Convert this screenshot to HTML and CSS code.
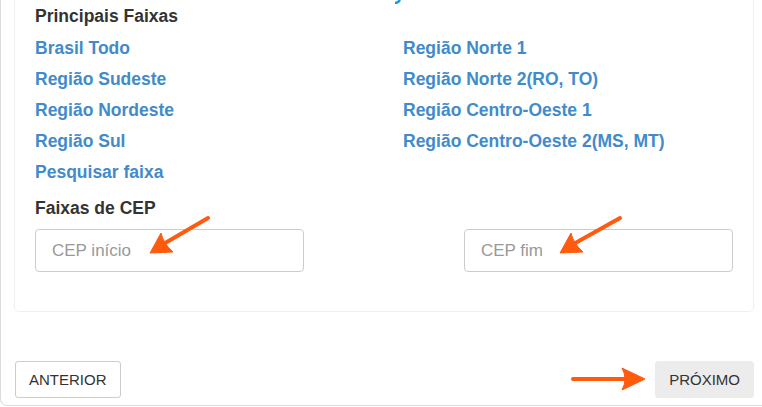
FILE: index.html
```html
<!DOCTYPE html>
<html lang="pt-BR">
<head>
    <meta charset="UTF-8">
    <meta name="viewport" content="width=device-width, initial-scale=1.0">
    <title>Faixas de CEP</title>
    <link rel="stylesheet" href="styles.css">
</head>
<body>
    <div class="wizard">
        <svg class="title-tail" width="8" height="4" viewBox="0 0 8 4">
            <path d="M1 3 Q4 3 6 0" stroke="#1b96dc" stroke-width="2.4" fill="none"/>
        </svg>
        <div class="panel">
            <h4 class="section-title">Principais Faixas</h4>
            <div class="ranges">
                <a href="#">Brasil Todo</a>
                <a href="#">Região Norte 1</a>
                <a href="#">Região Sudeste</a>
                <a href="#">Região Norte 2(RO, TO)</a>
                <a href="#">Região Nordeste</a>
                <a href="#">Região Centro-Oeste 1</a>
                <a href="#">Região Sul</a>
                <a href="#">Região Centro-Oeste 2(MS, MT)</a>
                <a href="#">Pesquisar faixa</a>
            </div>
            <h4 class="section-title cep-title">Faixas de CEP</h4>
            <div class="cep-fields">
                <input type="text" placeholder="CEP início">
                <input type="text" placeholder="CEP fim">
            </div>
        </div>
        <div class="actions">
            <button class="btn">ANTERIOR</button>
            <button class="btn btn-next">PRÓXIMO</button>
        </div>

        <!-- orange hint arrows drawn over the form -->
        <svg class="hints" width="762" height="407" viewBox="0 0 762 407">
            <g fill="#ff5a0e" stroke="#ff5a0e">
                <line x1="208" y1="218" x2="160" y2="246" stroke-width="4" stroke-linecap="round"/>
                <path d="M150 253 L161 233 Q163 243 173 252 Z" stroke-width="1" stroke-linejoin="round"/>
                <line x1="620" y1="218" x2="570" y2="246" stroke-width="4" stroke-linecap="round"/>
                <path d="M560 253 L571 233 Q573 243 583 252 Z" stroke-width="1" stroke-linejoin="round"/>
                <line x1="573" y1="379" x2="632" y2="379" stroke-width="4" stroke-linecap="round"/>
                <path d="M645 379 L622 368 Q628 379 622 390 Z" stroke-width="1" stroke-linejoin="round"/>
            </g>
        </svg>
    </div>
</body>
</html>
```

FILE: styles.css
```css
body {
    margin: 0;
    background-color: #fff;
    font-family: "Liberation Sans", Arial, sans-serif;
    color: #333;
    overflow: hidden;
}

.wizard {
    position: relative;
    width: 740px;
    height: 405px;
    padding: 0 14px 0 13px;
    border-left: 1px solid #dcdcdc;
    border-bottom: 1px solid #dcdcdc;
    border-bottom-left-radius: 7px;
}

.title-tail {
    position: absolute;
    left: 393px;
    top: 0;
}

.panel {
    padding: 6px 20px 39px 20px;
    border: 1px solid #efefef;
    border-top: 0;
    border-bottom-left-radius: 5px;
    border-bottom-right-radius: 5px;
}

.section-title {
    margin: 0;
    font-size: 17.5px;
    line-height: 20px;
    font-weight: bold;
    color: #333;
}

.ranges {
    display: grid;
    grid-template-columns: 368px 1fr;
    margin-top: 7px;
}

.ranges a {
    font-size: 17.5px;
    font-weight: bold;
    line-height: 31px;
    color: #428bca;
    text-decoration: none;
}

.cep-title {
    margin-top: 10px;
}

.cep-fields {
    display: flex;
    justify-content: space-between;
    margin-top: 11px;
}

.cep-fields input {
    box-sizing: border-box;
    width: 269px;
    height: 43px;
    padding: 0 16px;
    border: 1px solid #ccc;
    border-radius: 4px;
    font-family: "Liberation Sans", Arial, sans-serif;
    font-size: 17px;
    color: #555;
}

.cep-fields input::placeholder {
    color: #999;
}

.actions {
    display: flex;
    justify-content: space-between;
    margin: 49px 0 0 1px;
}

.btn {
    box-sizing: border-box;
    height: 37px;
    padding: 0 13px;
    border: 1px solid #ccc;
    border-radius: 3px;
    background-color: #fff;
    font-family: "Liberation Sans", Arial, sans-serif;
    font-size: 15px;
    color: #333;
}

.btn-next {
    border-color: #ececec;
    background-color: #ececec;
}

.hints {
    position: absolute;
    left: -1px;
    top: 0;
    pointer-events: none;
}
```
